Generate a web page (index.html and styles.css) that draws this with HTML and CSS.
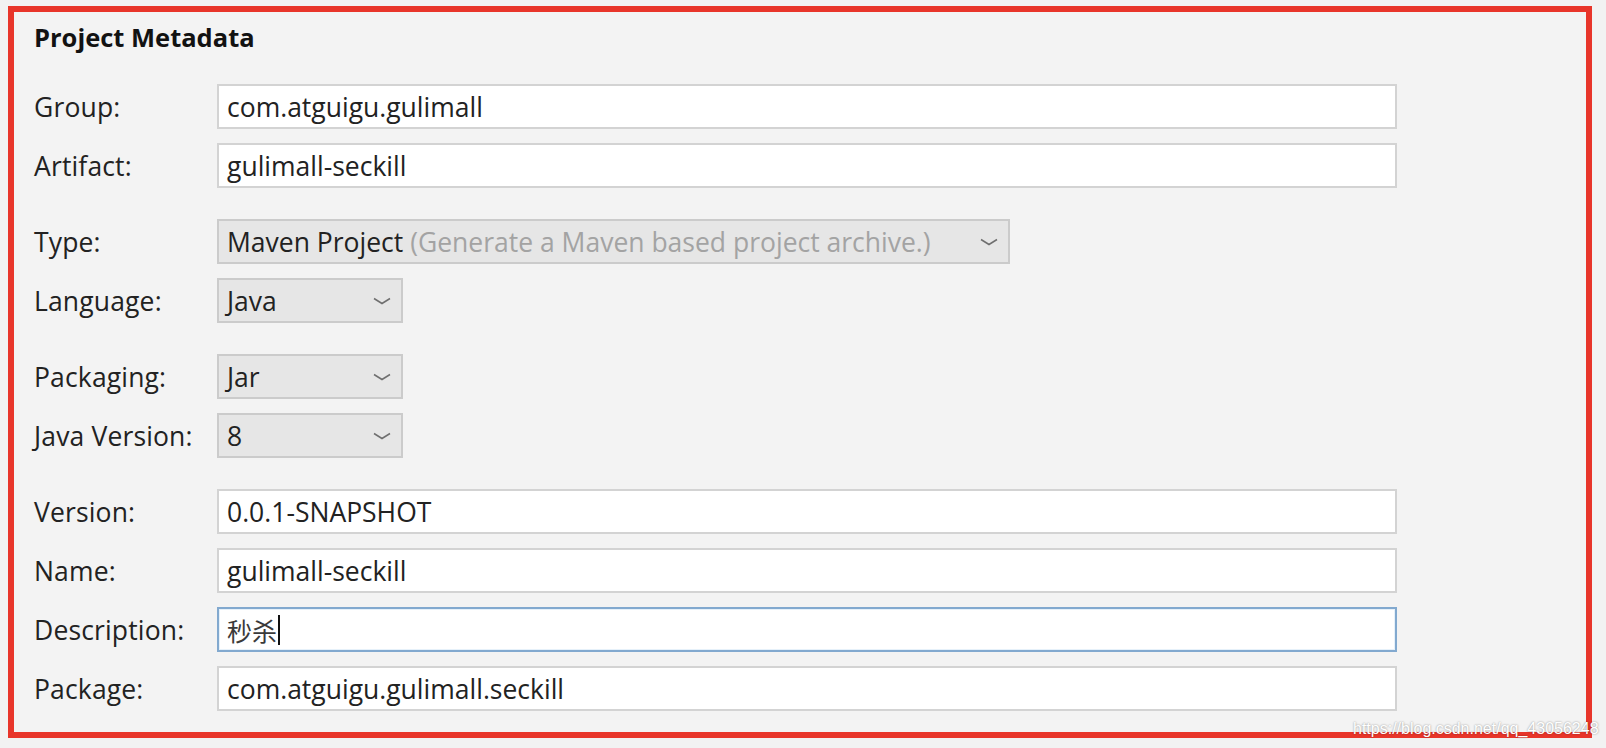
FILE: index.html
```html
<!DOCTYPE html>
<html lang="en">
<head>
<meta charset="utf-8">
<title>Project Metadata</title>
<link rel="stylesheet" href="styles.css">
</head>
<body>
<div class="frame">
  <h1 class="title">Project Metadata</h1>
  <div class="form">
    <div class="group">
      <div class="row"><span class="label">Group:</span><div class="field text wide">com.atguigu.gulimall</div></div>
      <div class="row"><span class="label">Artifact:</span><div class="field text wide">gulimall-seckill</div></div>
    </div>
    <div class="group">
      <div class="row"><span class="label">Type:</span><div class="field select type"><span class="value">Maven Project <span class="hint">(Generate a Maven based project archive.)</span></span><svg class="chev" width="18" height="8" viewBox="0 0 18 8"><path d="M1 1.5 L9 6.5 L17 1.5" fill="none" stroke="#6f6f6f" stroke-width="1.5"/></svg></div></div>
      <div class="row"><span class="label">Language:</span><div class="field select small"><span class="value">Java</span><svg class="chev" width="18" height="8" viewBox="0 0 18 8"><path d="M1 1.5 L9 6.5 L17 1.5" fill="none" stroke="#6f6f6f" stroke-width="1.5"/></svg></div></div>
    </div>
    <div class="group">
      <div class="row"><span class="label">Packaging:</span><div class="field select small"><span class="value">Jar</span><svg class="chev" width="18" height="8" viewBox="0 0 18 8"><path d="M1 1.5 L9 6.5 L17 1.5" fill="none" stroke="#6f6f6f" stroke-width="1.5"/></svg></div></div>
      <div class="row"><span class="label">Java Version:</span><div class="field select small"><span class="value">8</span><svg class="chev" width="18" height="8" viewBox="0 0 18 8"><path d="M1 1.5 L9 6.5 L17 1.5" fill="none" stroke="#6f6f6f" stroke-width="1.5"/></svg></div></div>
    </div>
    <div class="group">
      <div class="row"><span class="label">Version:</span><div class="field text wide">0.0.1-SNAPSHOT</div></div>
      <div class="row"><span class="label">Name:</span><div class="field text wide">gulimall-seckill</div></div>
      <div class="row"><span class="label">Description:</span><div class="field text wide focused"><span class="cjk">秒杀</span><span class="caret"></span></div></div>
      <div class="row"><span class="label">Package:</span><div class="field text wide">com.atguigu.gulimall.seckill</div></div>
    </div>
  </div>
</div>
<div class="watermark">https://blog.csdn.net/qq_43056248</div>
</body>
</html>
```
FILE: styles.css
```css
html, body {
  margin: 0;
  padding: 0;
}
body {
  width: 1606px;
  height: 748px;
  background: #f2f2f2;
  font-family: "Open Sans", "Noto Sans", sans-serif;
  color: #222222;
  position: relative;
  overflow: hidden;
}
.frame {
  box-sizing: border-box;
  margin: 6px 0 0 8px;
  width: 1584px;
  height: 732px;
  border: 6px solid #e8352a;
  background: #f3f3f3;
  padding: 10px 0 0 20px;
}
.title {
  margin: 0 0 32px 0;
  height: 30px;
  line-height: 30px;
  font-size: 25.5px;
  font-weight: 700;
  color: #121212;
}
.form {
  display: flex;
  flex-direction: column;
  gap: 31px;
}
.group {
  display: flex;
  flex-direction: column;
  gap: 14px;
}
.row {
  display: flex;
  align-items: center;
  height: 45px;
}
.label {
  width: 183px;
  flex: none;
  font-size: 26.5px;
  color: #222222;
  white-space: nowrap;
  letter-spacing: 0.15px;
}
.field {
  box-sizing: border-box;
  height: 45px;
  display: flex;
  align-items: center;
  font-size: 26.5px;
  padding-left: 8px;
  white-space: nowrap;
}
.text {
  background: #ffffff;
  border: 2px solid #d3d3d3;
}
.wide {
  width: 1180px;
}
.focused {
  border-color: #82a9cf;
  box-shadow: inset 0 0 0 1px #e6f1fa;
}
.select {
  background: #e6e6e6;
  border: 2px solid #cbcbcb;
  justify-content: space-between;
  padding-right: 10px;
}
.type {
  width: 793px;
}
.small {
  width: 186px;
}
.hint {
  color: #a3a3a3;
}
.chev {
  flex: none;
}
.cjk {
  font-family: "Noto Sans CJK SC", sans-serif;
  font-size: 25px;
  color: #3a3a3a;
}
.caret {
  display: inline-block;
  width: 2px;
  height: 30px;
  background: #111;
  margin-left: 1px;
}
.watermark {
  position: absolute;
  left: 1353px;
  top: 720px;
  font-family: "Liberation Sans", Arial, sans-serif;
  font-size: 16px;
  color: #ffffff;
  text-shadow: 0 0 2px rgba(0, 0, 0, 0.45);
  white-space: nowrap;
}
```
